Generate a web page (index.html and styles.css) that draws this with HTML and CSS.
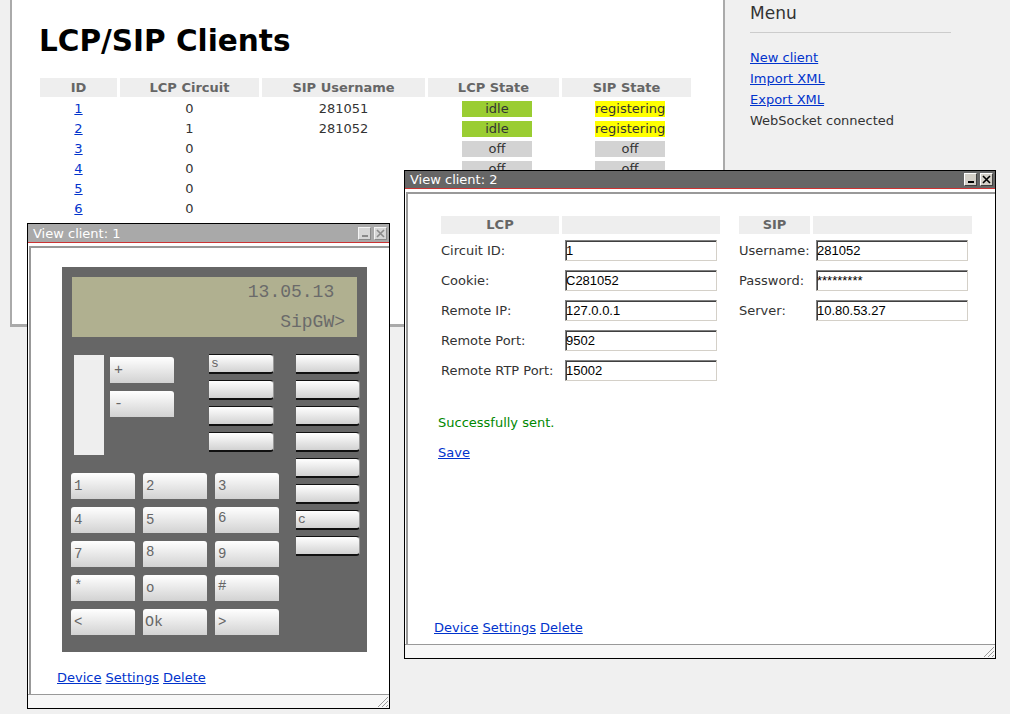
FILE: index.html
```html
<!DOCTYPE html>
<html>
<head>
<meta charset="utf-8">
<title>LCP/SIP Clients</title>
<link rel="stylesheet" href="styles.css">
</head>
<body>
<div class="page">
  <div class="main">
    <h1>LCP/SIP Clients</h1>
    <table class="clients">
      <thead>
        <tr><th class="c-id">ID</th><th class="c-circ">LCP Circuit</th><th class="c-user">SIP Username</th><th class="c-lcp">LCP State</th><th class="c-sip">SIP State</th></tr>
      </thead>
      <tbody>
        <tr><td><a href="#">1</a></td><td>0</td><td>281051</td><td><span class="st idle">idle</span></td><td><span class="st reg">registering</span></td></tr>
        <tr><td><a href="#">2</a></td><td>1</td><td>281052</td><td><span class="st idle">idle</span></td><td><span class="st reg">registering</span></td></tr>
        <tr><td><a href="#">3</a></td><td>0</td><td></td><td><span class="st off">off</span></td><td><span class="st off">off</span></td></tr>
        <tr><td><a href="#">4</a></td><td>0</td><td></td><td><span class="st off">off</span></td><td><span class="st off">off</span></td></tr>
        <tr><td><a href="#">5</a></td><td>0</td><td></td><td><span class="st off">off</span></td><td><span class="st off">off</span></td></tr>
        <tr><td><a href="#">6</a></td><td>0</td><td></td><td><span class="st off">off</span></td><td><span class="st off">off</span></td></tr>
      </tbody>
    </table>
  </div>
  <div class="side">
    <h2>Menu</h2>
    <ul class="menu">
      <li><a href="#">New client</a></li>
      <li><a href="#">Import XML</a></li>
      <li><a href="#">Export XML</a></li>
      <li>WebSocket connected</li>
    </ul>
  </div>
</div>

<div class="win w1 inactive">
  <div class="titlebar">
    <span class="title">View client: 1</span>
    <span class="tbtns">
      <span class="tbtn"><svg width="11" height="11" viewBox="0 0 11 11"><rect x="3" y="7" width="6" height="2" fill="currentColor"/></svg></span>
      <span class="tbtn"><svg width="11" height="11" viewBox="0 0 11 11"><path d="M2 2 L9 9 M9 2 L2 9" stroke="currentColor" stroke-width="1.6" fill="none"/></svg></span>
    </span>
  </div>
  <div class="wbody">
    <div class="wcontent">
      <div class="phone">
        <div class="lcd"><div>13.05.13&nbsp;</div><div>SipGW&gt;</div></div>
        <div class="lower">
          <div class="lower-left">
            <div class="toprow">
              <div class="bar"></div>
              <div class="pm">
                <div class="pmkey">+</div>
                <div class="pmkey">-</div>
              </div>
              <div class="fcol">
                <div class="fkey">s</div>
                <div class="fkey"></div>
                <div class="fkey"></div>
                <div class="fkey"></div>
              </div>
            </div>
            <div class="keypad">
              <div class="key">1</div>
              <div class="key">2</div>
              <div class="key">3</div>
              <div class="key">4</div>
              <div class="key">5</div>
              <div class="key hi">6</div>
              <div class="key">7</div>
              <div class="key hi">8</div>
              <div class="key">9</div>
              <div class="key hi">*</div>
              <div class="key">o</div>
              <div class="key hi">#</div>
              <div class="key">&lt;</div>
              <div class="key ok">Ok</div>
              <div class="key">&gt;</div>
            </div>
          </div>
          <div class="fcol fcol-b">
            <div class="fkey"></div>
            <div class="fkey"></div>
            <div class="fkey"></div>
            <div class="fkey"></div>
            <div class="fkey"></div>
            <div class="fkey"></div>
            <div class="fkey">c</div>
            <div class="fkey"></div>
          </div>
        </div>
      </div>
      <div class="wlinks"><a href="#">Device</a> <a href="#">Settings</a> <a href="#">Delete</a></div>
    </div>
  </div>
  <div class="status"><svg class="grip" width="12" height="12" viewBox="0 0 12 12"><path d="M11 1 L1 11 M11 5 L5 11 M11 9 L9 11" stroke="#9a9a9a" stroke-width="1" fill="none"/></svg></div>
</div>

<div class="win w2">
  <div class="titlebar">
    <span class="title">View client: 2</span>
    <span class="tbtns">
      <span class="tbtn"><svg width="11" height="11" viewBox="0 0 11 11"><rect x="3" y="7" width="6" height="2" fill="currentColor"/></svg></span>
      <span class="tbtn"><svg width="11" height="11" viewBox="0 0 11 11"><path d="M2 2 L9 9 M9 2 L2 9" stroke="currentColor" stroke-width="1.6" fill="none"/></svg></span>
    </span>
  </div>
  <div class="wbody">
    <div class="wcontent">
      <div class="forms">
        <table class="form">
          <thead><tr><th class="lbl-lcp">LCP</th><th class="inp-lcp"></th></tr></thead>
          <tbody>
            <tr><td>Circuit ID:</td><td class="in"><input type="text" value="1"></td></tr>
            <tr><td>Cookie:</td><td class="in"><input type="text" value="C281052"></td></tr>
            <tr><td>Remote IP:</td><td class="in"><input type="text" value="127.0.0.1"></td></tr>
            <tr><td>Remote Port:</td><td class="in"><input type="text" value="9502"></td></tr>
            <tr><td>Remote RTP Port:</td><td class="in"><input type="text" value="15002"></td></tr>
          </tbody>
        </table>
        <table class="form">
          <thead><tr><th class="lbl-sip">SIP</th><th class="inp-sip"></th></tr></thead>
          <tbody>
            <tr><td>Username:</td><td class="in"><input type="text" value="281052"></td></tr>
            <tr><td>Password:</td><td class="in"><input type="text" value="*********"></td></tr>
            <tr><td>Server:</td><td class="in"><input type="text" value="10.80.53.27"></td></tr>
          </tbody>
        </table>
      </div>
      <div class="msg">Successfully sent.</div>
      <div class="save"><a href="#">Save</a></div>
      <div class="wlinks"><a href="#">Device</a> <a href="#">Settings</a> <a href="#">Delete</a></div>
    </div>
  </div>
  <div class="status"><svg class="grip" width="12" height="12" viewBox="0 0 12 12"><path d="M11 1 L1 11 M11 5 L5 11 M11 9 L9 11" stroke="#9a9a9a" stroke-width="1" fill="none"/></svg></div>
</div>
</body>
</html>
```

FILE: styles.css
```css
* { box-sizing: border-box; }
html, body { margin: 0; padding: 0; }
body {
  width: 1010px;
  height: 714px;
  overflow: hidden;
  position: relative;
  background: #f0f0f0;
  font: 13px "DejaVu Sans", Verdana, sans-serif;
  color: #333;
}
a { color: #0033cc; text-decoration: underline; }

.page { display: flex; align-items: flex-start; }

.main {
  margin-left: 10px;
  width: 715px;
  height: 327px;
  background: #fff;
  border: 2px solid #aaa;
  border-top: 0;
  border-bottom-width: 3px;
  padding: 24px 0 0 25px;
}
.main h1 {
  margin: 0 0 16px 2px;
  font-size: 29.5px;
  line-height: 34px;
  font-weight: bold;
  color: #000;
}
.clients { border-collapse: separate; border-spacing: 3px 4px; }
.clients th {
  height: 19px;
  padding: 0;
  background: #eee;
  color: #666;
  font-weight: bold;
  text-align: center;
  line-height: 19px;
}
.c-id { width: 77px; }
.c-circ { width: 139px; }
.c-user { width: 163px; }
.c-lcp { width: 131px; }
.c-sip { width: 129px; }
.clients td {
  height: 16px;
  padding: 0;
  text-align: center;
  line-height: 16px;
}
.st {
  display: inline-block;
  vertical-align: top;
  width: 70px;
  height: 16px;
  line-height: 16px;
  margin-left: 7px;
  color: #333;
}
.idle { background: #9acd32; }
.reg { background: #ffff00; }
.off { background: #d3d3d3; }

.side { padding: 3px 0 0 25px; width: 260px; }
.side h2 {
  margin: 0;
  width: 201px;
  font-size: 17px;
  font-weight: normal;
  line-height: 20px;
  color: #333;
  padding-bottom: 9px;
  border-bottom: 1px solid #ccc;
}
.menu { list-style: none; margin: 14px 0 0; padding: 0; }
.menu li { line-height: 21px; }

/* windows */
.win {
  position: absolute;
  display: flex;
  flex-direction: column;
  background: #fff;
  border: 1px solid #000;
}
.w1 { left: 27px; top: 223px; width: 363px; height: 486px; }
.w2 { left: 404px; top: 170px; width: 592px; height: 489px; }

.titlebar {
  flex: none;
  height: 18px;
  display: flex;
  align-items: center;
  justify-content: space-between;
  padding: 0 2px 0 5px;
  background: #666;
  color: #fff;
  border-bottom: 1px solid #cc3333;
}
.w1 .titlebar { height: 19px; }
.inactive .titlebar { background: #a9a9a9; }
.title { line-height: 17px; }
.tbtns { display: flex; gap: 3px; }
.tbtn {
  width: 13px;
  height: 13px;
  display: flex;
  background: #d4d0c8;
  border: 1px solid;
  border-color: #fff #404040 #404040 #fff;
  color: #000;
}
.inactive .tbtn { background: #d6d6d6; color: #8a8a8a; border-color: #f4f4f4 #8a8a8a #8a8a8a #f4f4f4; }

.wbody {
  flex: 1;
  min-height: 0;
  display: flex;
  padding: 3px 0 0 1px;
}
.wcontent {
  flex: 1;
  display: flex;
  flex-direction: column;
  border-top: 2px solid #999;
  border-left: 2px solid #999;
}
.wlinks {
  margin-top: auto;
  padding: 0 0 9px 26px;
  line-height: 15px;
}
.status {
  flex: none;
  height: 14px;
  border-top: 1px solid #999;
  background: #f7f7f7;
  display: flex;
  justify-content: flex-end;
  align-items: flex-end;
}
.grip { display: block; }

/* phone */
.phone {
  width: 305px;
  height: 385px;
  flex: none;
  background: #666;
  margin: 19px 0 0 31px;
  padding: 10px 0 0 10px;
}
.lcd {
  width: 285px;
  height: 60px;
  background: #b0b090;
  font: 18px "Liberation Mono", "Courier New", monospace;
  color: #6a6a6a;
  line-height: 30px;
  text-align: right;
  padding-right: 12px;
  white-space: pre;
}
.lower { display: flex; align-items: flex-start; margin: 17px 0 0 -1px; }
.lower-left { width: 208px; flex: none; }
.toprow { display: flex; align-items: flex-start; height: 101px; }
.bar { width: 30px; height: 100px; background: #eee; margin: 1px 0 0 3px; }
.pm { display: flex; flex-direction: column; gap: 8px; margin: 3px 0 0 6px; }
.pmkey, .key, .fkey {
  background: linear-gradient(#ffffff, #d2d2d2);
  color: #666;
  font: 13px "Liberation Mono", "Courier New", monospace;
  display: flex;
  align-items: center;
}
.pmkey {
  width: 64px;
  height: 26px;
  padding-left: 4px;
  border-top-right-radius: 3px;
  font-size: 15px;
}
.fcol { display: flex; flex-direction: column; gap: 6px; margin-left: 35px; }
.fcol-b { margin-left: 17px; flex: none; }
.fkey {
  width: 65px;
  height: 20px;
  padding-left: 2px;
  border-top: 1px solid #111;
  border-bottom: 2px solid #111;
  border-right: 1px solid #9a9a9a;
  border-radius: 0 4px 4px 0;
}
.fcol-b .fkey { width: 64px; }
.keypad {
  display: grid;
  grid-template-columns: repeat(3, 64px);
  grid-auto-rows: 26px;
  gap: 8px;
  margin-top: 18px;
}
.key {
  padding-left: 3px;
  border-radius: 3px 3px 0 0;
  font-size: 14px;
}
.key.hi { padding-bottom: 4px; }
.key.ok { font-size: 15px; padding-left: 2px; }

/* form window */
.forms {
  display: flex;
  align-items: flex-start;
  gap: 13px;
  margin: 20px 0 0 30px;
}
.form { border-collapse: separate; border-spacing: 3px 2px; }
.form th {
  height: 18px;
  padding: 0;
  background: #eee;
  color: #666;
  font-weight: bold;
  text-align: center;
  line-height: 18px;
}
.lbl-lcp { width: 118px; }
.inp-lcp { width: 158px; }
.lbl-sip { width: 71px; }
.inp-sip { width: 159px; }
.form td {
  height: 28px;
  padding: 0;
  white-space: nowrap;
  vertical-align: middle;
}
.form td.in { padding: 0 3px; }
.form input {
  display: block;
  width: 152px;
  height: 21px;
  margin: 0;
  padding: 0;
  font: 13px "Liberation Sans", Arial, sans-serif;
  color: #000;
  background: #fff;
  border: 1px solid;
  border-color: #808080 #d4d0c8 #d4d0c8 #808080;
  box-shadow: inset 0 1px 0 #404040, inset 1px 0 0 #404040;
  outline: none;
}
.msg { margin: 29px 0 0 30px; color: #008800; line-height: 16px; }
.save { margin: 14px 0 0 30px; line-height: 16px; }
```
